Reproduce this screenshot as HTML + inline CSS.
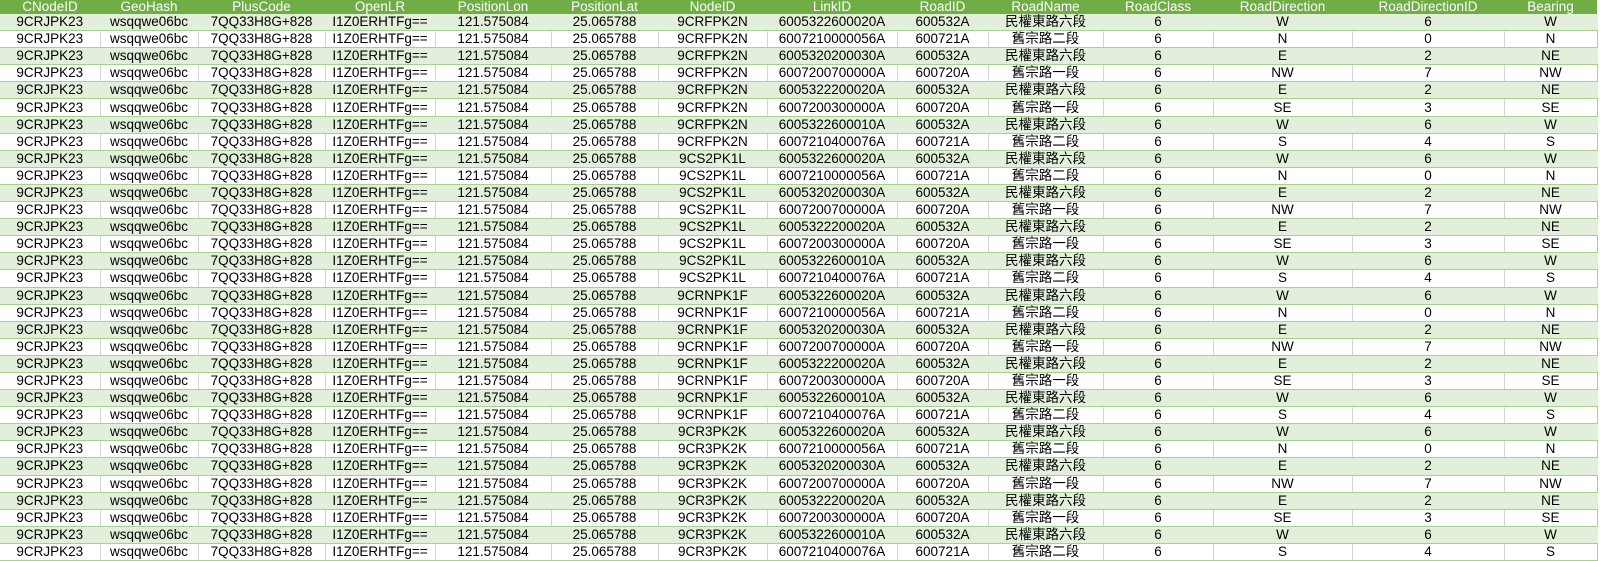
<!DOCTYPE html>
<html><head><meta charset="utf-8"><style>
body{margin:0;background:#fff;width:1600px;height:559px;overflow:hidden}
table{border-collapse:collapse;table-layout:fixed;width:1597px;font-family:"Liberation Sans","Noto Sans CJK TC",sans-serif;font-size:13.5px;color:#000}
td,th{text-align:center;white-space:nowrap;overflow:hidden;padding:0;line-height:16px}
th{background:#70ad47;color:#fff;font-weight:normal;height:14px;line-height:14px;border:none}
td{height:16.1px;border-bottom:1px solid #a9d08e;border-right:1px solid #d4d4d4}
tr.g td{background:#e2efda;border-right-color:#e2efda}
td:last-child{border-right:1px solid #a9d08e}
</style></head><body>
<table>
<colgroup><col style="width:100px"><col style="width:98px"><col style="width:127px"><col style="width:110px"><col style="width:116px"><col style="width:107px"><col style="width:109px"><col style="width:130px"><col style="width:91px"><col style="width:115px"><col style="width:110px"><col style="width:139px"><col style="width:152px"><col style="width:93px"></colgroup>
<tr><th>CNodeID</th><th>GeoHash</th><th>PlusCode</th><th>OpenLR</th><th>PositionLon</th><th>PositionLat</th><th>NodeID</th><th>LinkID</th><th>RoadID</th><th>RoadName</th><th>RoadClass</th><th>RoadDirection</th><th>RoadDirectionID</th><th>Bearing</th></tr>
<tr class="g"><td>9CRJPK23</td><td>wsqqwe06bc</td><td>7QQ33H8G+828</td><td>I1Z0ERHTFg==</td><td>121.575084</td><td>25.065788</td><td>9CRFPK2N</td><td>6005322600020A</td><td>600532A</td><td>民權東路六段</td><td>6</td><td>W</td><td>6</td><td>W</td></tr>
<tr><td>9CRJPK23</td><td>wsqqwe06bc</td><td>7QQ33H8G+828</td><td>I1Z0ERHTFg==</td><td>121.575084</td><td>25.065788</td><td>9CRFPK2N</td><td>6007210000056A</td><td>600721A</td><td>舊宗路二段</td><td>6</td><td>N</td><td>0</td><td>N</td></tr>
<tr class="g"><td>9CRJPK23</td><td>wsqqwe06bc</td><td>7QQ33H8G+828</td><td>I1Z0ERHTFg==</td><td>121.575084</td><td>25.065788</td><td>9CRFPK2N</td><td>6005320200030A</td><td>600532A</td><td>民權東路六段</td><td>6</td><td>E</td><td>2</td><td>NE</td></tr>
<tr><td>9CRJPK23</td><td>wsqqwe06bc</td><td>7QQ33H8G+828</td><td>I1Z0ERHTFg==</td><td>121.575084</td><td>25.065788</td><td>9CRFPK2N</td><td>6007200700000A</td><td>600720A</td><td>舊宗路一段</td><td>6</td><td>NW</td><td>7</td><td>NW</td></tr>
<tr class="g"><td>9CRJPK23</td><td>wsqqwe06bc</td><td>7QQ33H8G+828</td><td>I1Z0ERHTFg==</td><td>121.575084</td><td>25.065788</td><td>9CRFPK2N</td><td>6005322200020A</td><td>600532A</td><td>民權東路六段</td><td>6</td><td>E</td><td>2</td><td>NE</td></tr>
<tr><td>9CRJPK23</td><td>wsqqwe06bc</td><td>7QQ33H8G+828</td><td>I1Z0ERHTFg==</td><td>121.575084</td><td>25.065788</td><td>9CRFPK2N</td><td>6007200300000A</td><td>600720A</td><td>舊宗路一段</td><td>6</td><td>SE</td><td>3</td><td>SE</td></tr>
<tr class="g"><td>9CRJPK23</td><td>wsqqwe06bc</td><td>7QQ33H8G+828</td><td>I1Z0ERHTFg==</td><td>121.575084</td><td>25.065788</td><td>9CRFPK2N</td><td>6005322600010A</td><td>600532A</td><td>民權東路六段</td><td>6</td><td>W</td><td>6</td><td>W</td></tr>
<tr><td>9CRJPK23</td><td>wsqqwe06bc</td><td>7QQ33H8G+828</td><td>I1Z0ERHTFg==</td><td>121.575084</td><td>25.065788</td><td>9CRFPK2N</td><td>6007210400076A</td><td>600721A</td><td>舊宗路二段</td><td>6</td><td>S</td><td>4</td><td>S</td></tr>
<tr class="g"><td>9CRJPK23</td><td>wsqqwe06bc</td><td>7QQ33H8G+828</td><td>I1Z0ERHTFg==</td><td>121.575084</td><td>25.065788</td><td>9CS2PK1L</td><td>6005322600020A</td><td>600532A</td><td>民權東路六段</td><td>6</td><td>W</td><td>6</td><td>W</td></tr>
<tr><td>9CRJPK23</td><td>wsqqwe06bc</td><td>7QQ33H8G+828</td><td>I1Z0ERHTFg==</td><td>121.575084</td><td>25.065788</td><td>9CS2PK1L</td><td>6007210000056A</td><td>600721A</td><td>舊宗路二段</td><td>6</td><td>N</td><td>0</td><td>N</td></tr>
<tr class="g"><td>9CRJPK23</td><td>wsqqwe06bc</td><td>7QQ33H8G+828</td><td>I1Z0ERHTFg==</td><td>121.575084</td><td>25.065788</td><td>9CS2PK1L</td><td>6005320200030A</td><td>600532A</td><td>民權東路六段</td><td>6</td><td>E</td><td>2</td><td>NE</td></tr>
<tr><td>9CRJPK23</td><td>wsqqwe06bc</td><td>7QQ33H8G+828</td><td>I1Z0ERHTFg==</td><td>121.575084</td><td>25.065788</td><td>9CS2PK1L</td><td>6007200700000A</td><td>600720A</td><td>舊宗路一段</td><td>6</td><td>NW</td><td>7</td><td>NW</td></tr>
<tr class="g"><td>9CRJPK23</td><td>wsqqwe06bc</td><td>7QQ33H8G+828</td><td>I1Z0ERHTFg==</td><td>121.575084</td><td>25.065788</td><td>9CS2PK1L</td><td>6005322200020A</td><td>600532A</td><td>民權東路六段</td><td>6</td><td>E</td><td>2</td><td>NE</td></tr>
<tr><td>9CRJPK23</td><td>wsqqwe06bc</td><td>7QQ33H8G+828</td><td>I1Z0ERHTFg==</td><td>121.575084</td><td>25.065788</td><td>9CS2PK1L</td><td>6007200300000A</td><td>600720A</td><td>舊宗路一段</td><td>6</td><td>SE</td><td>3</td><td>SE</td></tr>
<tr class="g"><td>9CRJPK23</td><td>wsqqwe06bc</td><td>7QQ33H8G+828</td><td>I1Z0ERHTFg==</td><td>121.575084</td><td>25.065788</td><td>9CS2PK1L</td><td>6005322600010A</td><td>600532A</td><td>民權東路六段</td><td>6</td><td>W</td><td>6</td><td>W</td></tr>
<tr><td>9CRJPK23</td><td>wsqqwe06bc</td><td>7QQ33H8G+828</td><td>I1Z0ERHTFg==</td><td>121.575084</td><td>25.065788</td><td>9CS2PK1L</td><td>6007210400076A</td><td>600721A</td><td>舊宗路二段</td><td>6</td><td>S</td><td>4</td><td>S</td></tr>
<tr class="g"><td>9CRJPK23</td><td>wsqqwe06bc</td><td>7QQ33H8G+828</td><td>I1Z0ERHTFg==</td><td>121.575084</td><td>25.065788</td><td>9CRNPK1F</td><td>6005322600020A</td><td>600532A</td><td>民權東路六段</td><td>6</td><td>W</td><td>6</td><td>W</td></tr>
<tr><td>9CRJPK23</td><td>wsqqwe06bc</td><td>7QQ33H8G+828</td><td>I1Z0ERHTFg==</td><td>121.575084</td><td>25.065788</td><td>9CRNPK1F</td><td>6007210000056A</td><td>600721A</td><td>舊宗路二段</td><td>6</td><td>N</td><td>0</td><td>N</td></tr>
<tr class="g"><td>9CRJPK23</td><td>wsqqwe06bc</td><td>7QQ33H8G+828</td><td>I1Z0ERHTFg==</td><td>121.575084</td><td>25.065788</td><td>9CRNPK1F</td><td>6005320200030A</td><td>600532A</td><td>民權東路六段</td><td>6</td><td>E</td><td>2</td><td>NE</td></tr>
<tr><td>9CRJPK23</td><td>wsqqwe06bc</td><td>7QQ33H8G+828</td><td>I1Z0ERHTFg==</td><td>121.575084</td><td>25.065788</td><td>9CRNPK1F</td><td>6007200700000A</td><td>600720A</td><td>舊宗路一段</td><td>6</td><td>NW</td><td>7</td><td>NW</td></tr>
<tr class="g"><td>9CRJPK23</td><td>wsqqwe06bc</td><td>7QQ33H8G+828</td><td>I1Z0ERHTFg==</td><td>121.575084</td><td>25.065788</td><td>9CRNPK1F</td><td>6005322200020A</td><td>600532A</td><td>民權東路六段</td><td>6</td><td>E</td><td>2</td><td>NE</td></tr>
<tr><td>9CRJPK23</td><td>wsqqwe06bc</td><td>7QQ33H8G+828</td><td>I1Z0ERHTFg==</td><td>121.575084</td><td>25.065788</td><td>9CRNPK1F</td><td>6007200300000A</td><td>600720A</td><td>舊宗路一段</td><td>6</td><td>SE</td><td>3</td><td>SE</td></tr>
<tr class="g"><td>9CRJPK23</td><td>wsqqwe06bc</td><td>7QQ33H8G+828</td><td>I1Z0ERHTFg==</td><td>121.575084</td><td>25.065788</td><td>9CRNPK1F</td><td>6005322600010A</td><td>600532A</td><td>民權東路六段</td><td>6</td><td>W</td><td>6</td><td>W</td></tr>
<tr><td>9CRJPK23</td><td>wsqqwe06bc</td><td>7QQ33H8G+828</td><td>I1Z0ERHTFg==</td><td>121.575084</td><td>25.065788</td><td>9CRNPK1F</td><td>6007210400076A</td><td>600721A</td><td>舊宗路二段</td><td>6</td><td>S</td><td>4</td><td>S</td></tr>
<tr class="g"><td>9CRJPK23</td><td>wsqqwe06bc</td><td>7QQ33H8G+828</td><td>I1Z0ERHTFg==</td><td>121.575084</td><td>25.065788</td><td>9CR3PK2K</td><td>6005322600020A</td><td>600532A</td><td>民權東路六段</td><td>6</td><td>W</td><td>6</td><td>W</td></tr>
<tr><td>9CRJPK23</td><td>wsqqwe06bc</td><td>7QQ33H8G+828</td><td>I1Z0ERHTFg==</td><td>121.575084</td><td>25.065788</td><td>9CR3PK2K</td><td>6007210000056A</td><td>600721A</td><td>舊宗路二段</td><td>6</td><td>N</td><td>0</td><td>N</td></tr>
<tr class="g"><td>9CRJPK23</td><td>wsqqwe06bc</td><td>7QQ33H8G+828</td><td>I1Z0ERHTFg==</td><td>121.575084</td><td>25.065788</td><td>9CR3PK2K</td><td>6005320200030A</td><td>600532A</td><td>民權東路六段</td><td>6</td><td>E</td><td>2</td><td>NE</td></tr>
<tr><td>9CRJPK23</td><td>wsqqwe06bc</td><td>7QQ33H8G+828</td><td>I1Z0ERHTFg==</td><td>121.575084</td><td>25.065788</td><td>9CR3PK2K</td><td>6007200700000A</td><td>600720A</td><td>舊宗路一段</td><td>6</td><td>NW</td><td>7</td><td>NW</td></tr>
<tr class="g"><td>9CRJPK23</td><td>wsqqwe06bc</td><td>7QQ33H8G+828</td><td>I1Z0ERHTFg==</td><td>121.575084</td><td>25.065788</td><td>9CR3PK2K</td><td>6005322200020A</td><td>600532A</td><td>民權東路六段</td><td>6</td><td>E</td><td>2</td><td>NE</td></tr>
<tr><td>9CRJPK23</td><td>wsqqwe06bc</td><td>7QQ33H8G+828</td><td>I1Z0ERHTFg==</td><td>121.575084</td><td>25.065788</td><td>9CR3PK2K</td><td>6007200300000A</td><td>600720A</td><td>舊宗路一段</td><td>6</td><td>SE</td><td>3</td><td>SE</td></tr>
<tr class="g"><td>9CRJPK23</td><td>wsqqwe06bc</td><td>7QQ33H8G+828</td><td>I1Z0ERHTFg==</td><td>121.575084</td><td>25.065788</td><td>9CR3PK2K</td><td>6005322600010A</td><td>600532A</td><td>民權東路六段</td><td>6</td><td>W</td><td>6</td><td>W</td></tr>
<tr><td>9CRJPK23</td><td>wsqqwe06bc</td><td>7QQ33H8G+828</td><td>I1Z0ERHTFg==</td><td>121.575084</td><td>25.065788</td><td>9CR3PK2K</td><td>6007210400076A</td><td>600721A</td><td>舊宗路二段</td><td>6</td><td>S</td><td>4</td><td>S</td></tr>
</table>
</body></html>
